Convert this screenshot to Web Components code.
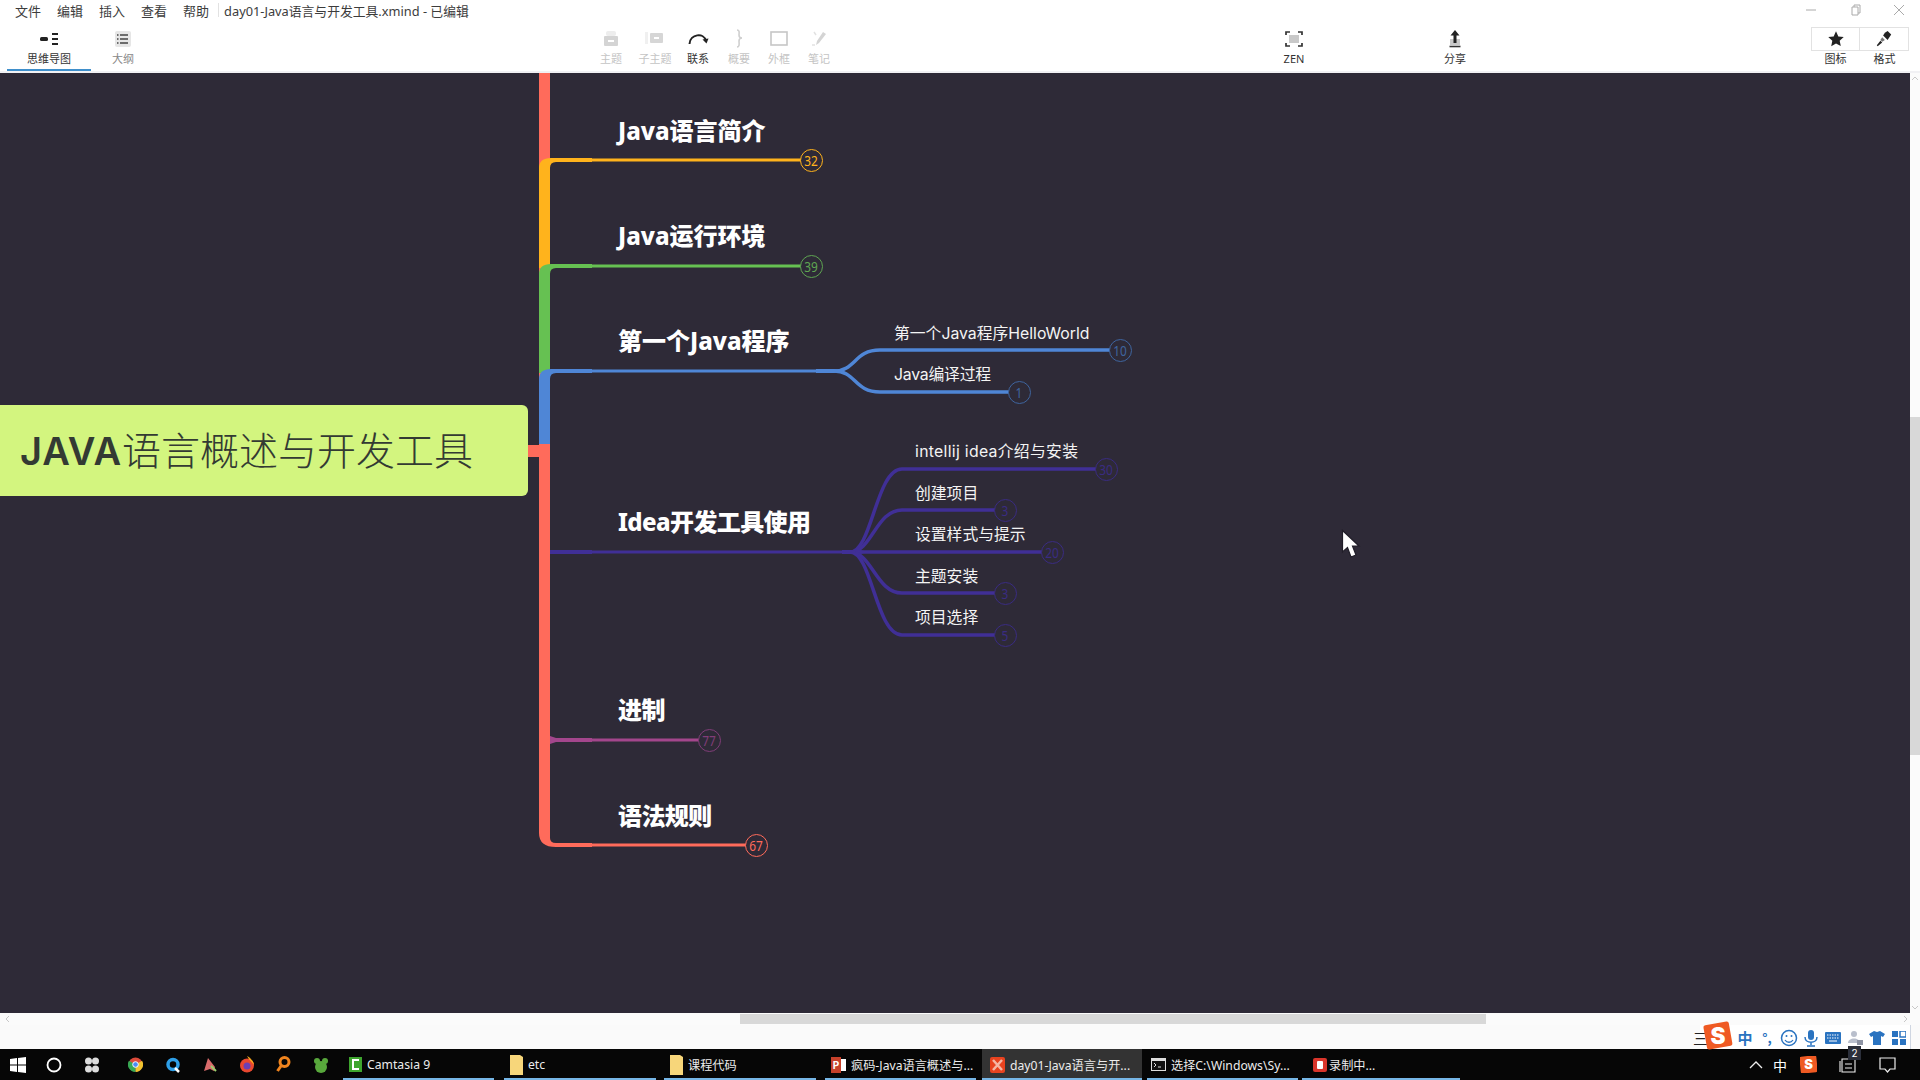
<!DOCTYPE html>
<html lang="zh">
<head>
<meta charset="utf-8">
<title>day01-Java语言与开发工具.xmind</title>
<style>
  html, body { margin: 0; height: 100%; }
  body {
    display: flex;
    flex-direction: column;
    width: 1920px;
    height: 1080px;
    overflow: hidden;
    background: #fff;
    font-family: "Noto Sans", "Noto Sans CJK SC", sans-serif;
  }
  .work { display: flex; height: 940px; }
</style>
</head>
<body>
<title-bar></title-bar>
<tool-bar>
  <tool-tab label="思维导图" active>
    <svg viewBox="0 0 24 20" width="24" height="20"><rect x="3" y="8" width="8" height="4" rx="1.5" fill="#222"/><path d="M15 5h6M15 10h6M15 15h6" stroke="#222" stroke-width="2"/></svg>
  </tool-tab>
  <tool-tab label="大纲">
    <svg viewBox="0 0 20 20" width="20" height="20"><rect x="2" y="2" width="16" height="16" rx="2" fill="#e6e6e6"/><path d="M7 6h8M7 10h8M7 14h8M4 6h1.5M4 10h1.5M4 14h1.5" stroke="#444" stroke-width="1.6"/></svg>
  </tool-tab>
  <tool-button label="主题" faint w="44" gap="434">
    <svg viewBox="0 0 20 20" width="20" height="20"><rect x="5" y="2" width="10" height="5" rx="2" fill="#ededed"/><rect x="3" y="7" width="14" height="10" rx="1" fill="#d4d4d4"/><rect x="7" y="11" width="6" height="2" fill="#fff"/></svg>
  </tool-button>
  <tool-button label="子主题" faint w="44">
    <svg viewBox="0 0 20 20" width="20" height="20"><rect x="0" y="3" width="3" height="12" fill="#f0f0f0"/><rect x="5" y="4" width="13" height="10" rx="1" fill="#d6d6d6"/><rect x="9" y="8" width="5" height="2" fill="#fff"/></svg>
  </tool-button>
  <tool-button label="联系" w="42">
    <svg viewBox="0 0 22 20" width="22" height="20"><path d="M2.5 15C3 5 17 3 19 12" fill="none" stroke="#222" stroke-width="2"/><path d="M15.5 10.5l4 4 2-5z" fill="#222"/></svg>
  </tool-button>
  <tool-button label="概要" faint w="40">
    <svg viewBox="0 0 20 20" width="20" height="20"><path d="M8 1c3 0 2 3 2 5s1 3 3 3c-2 0-3 1-3 3s1 6-2 6" fill="none" stroke="#cfcfcf" stroke-width="1.6"/></svg>
  </tool-button>
  <tool-button label="外框" faint w="40">
    <svg viewBox="0 0 20 20" width="20" height="20"><rect x="2" y="3" width="16" height="13" fill="none" stroke="#c6c6c6" stroke-width="1.6"/></svg>
  </tool-button>
  <tool-button label="笔记" faint w="40">
    <svg viewBox="0 0 20 20" width="20" height="20"><path d="M14 3l3 2-7 9-3 2 1-4z" fill="#d4d4d4"/><path d="M5 3l2 3M3 16h3" stroke="#e2e2e2" stroke-width="1.5"/></svg>
  </tool-button>
  <tool-button label="ZEN" w="44" gap="433">
    <svg viewBox="0 0 20 20" width="20" height="20"><rect x="5" y="6" width="10" height="8" fill="#c9c9c9"/><path d="M2 6V3h4M14 3h4v3M18 14v3h-4M6 17H2v-3" fill="none" stroke="#333" stroke-width="1.7"/></svg>
  </tool-button>
  <tool-button label="分享" w="44" gap="117">
    <svg viewBox="0 0 20 20" width="20" height="20"><rect x="5" y="10" width="10" height="6" fill="#c9c9c9"/><path d="M4.5 17.5h11" stroke="#333" stroke-width="1.6"/><path d="M10 1l4.5 5.5H11.5V14h-3V6.500H5.500z" fill="#222"/></svg>
  </tool-button>
  <tool-button label="图标" boxed w="49" gap="334">
    <svg viewBox="0 0 20 20" width="18" height="18"><path d="M10 1.500l2.600 5.600 6 .7-4.500 4.100 1.200 6L10 15l-5.300 3 1.200-6L1.400 7.800l6-.7z" fill="#222"/></svg>
  </tool-button>
  <tool-button label="格式" boxed w="49">
    <svg viewBox="0 0 20 20" width="18" height="18"><path d="M11 3l3-2 4 4-2 3-2 3-5-5z" fill="#222"/><path d="M8 8l3 3-3 2-2-2z" fill="#777"/><path d="M6 12l2 2-5 4-1-1z" fill="#222"/></svg>
  </tool-button>
</tool-bar>
<div class="work">
  <mind-map></mind-map>
  <v-scroll></v-scroll>
</div>
<h-scroll></h-scroll>
<ime-bar></ime-bar>
<task-bar>
  <task-item label="Camtasia 9" start="0" width="151" kind="cam" pad="6"></task-item>
  <task-item label="etc" start="10" width="152" kind="folder" pad="6"></task-item>
  <task-item label="课程代码" start="8" width="152" kind="folder" pad="6"></task-item>
  <task-item label="疯码-Java语言概述与..." start="9" width="151" kind="ppt" pad="6"></task-item>
  <task-item label="day01-Java语言与开..." start="6" width="160" kind="xmind" pad="8"></task-item>
  <task-item label="选择C:\Windows\Sy..." start="5" width="151" kind="cmd" pad="4"></task-item>
  <task-item label="录制中..." start="4" width="158" kind="rec" pad="11"></task-item>
</task-bar>

<script>
const sans = '"Noto Sans", "Noto Sans CJK SC", sans-serif';

class TitleBar extends HTMLElement {
  constructor() {
    super();
    this.attachShadow({ mode: 'open' });
    this.shadowRoot.innerHTML = `
      <style>
        :host {
          display: flex;
          align-items: center;
          box-sizing: border-box;
          height: 22px;
          padding: 0 0 2px 15px;
          background: #fff;
          color: #3c3c3c;
          font: 13px ${sans};
        }
        .menu { margin-right: 16px; }
        .sep { width: 1px; height: 14px; margin: 0 5px 0 -7px; background: #e2e2e2; }
        .name { flex: 1; font-size: 12.8px; }
        .ctl { display: flex; gap: 30px; margin-right: 14px; }
      </style>
      <span class="menu">文件</span>
      <span class="menu">编辑</span>
      <span class="menu">插入</span>
      <span class="menu">查看</span>
      <span class="menu">帮助</span>
      <span class="sep"></span>
      <span class="name">day01-Java语言与开发工具.xmind - 已编辑</span>
      <div class="ctl">
        <svg width="14" height="12" viewBox="0 0 14 12"><path d="M2 6h10" stroke="#aaa"/></svg>
        <svg width="14" height="12" viewBox="0 0 14 12"><path d="M4 3h6v8H4zM6 3V1h6v8h-2" fill="none" stroke="#aaa"/></svg>
        <svg width="14" height="12" viewBox="0 0 14 12"><path d="M2 1l10 10M12 1L2 11" stroke="#aaa"/></svg>
      </div>`;
  }
}

class ToolBar extends HTMLElement {
  constructor() {
    super();
    this.attachShadow({ mode: 'open' });
    this.shadowRoot.innerHTML = `
      <style>
        :host {
          display: flex;
          box-sizing: border-box;
          height: 51px;
          padding-left: 7px;
          background: #fff;
          border-bottom: 2px solid #f1f1f4;
        }
      </style>
      <slot></slot>`;
  }
}

class ToolTab extends HTMLElement {
  constructor() {
    super();
    this.attachShadow({ mode: 'open' });
    this.shadowRoot.innerHTML = `
      <style>
        :host {
          display: flex;
          flex-direction: column;
          align-items: center;
          box-sizing: border-box;
          width: 64px;
          padding-top: 6px;
          color: #888;
          font: 11px/16px ${sans};
        }
        :host([active]) {
          width: 84px;
          color: #333;
          border-bottom: 2px solid #3f8fcb;
        }
        .icon { display: flex; height: 23px; align-items: center; padding-bottom: 1px; box-sizing: border-box; }
      </style>
      <div class="icon"><slot></slot></div>
      <span>${this.getAttribute('label')}</span>`;
  }
}

class ToolButton extends HTMLElement {
  constructor() {
    super();
    this.attachShadow({ mode: 'open' });
    this.shadowRoot.innerHTML = `
      <style>
        :host {
          display: flex;
          flex-direction: column;
          align-items: center;
          padding-top: 6px;
          color: #333;
          font: 11px/16px ${sans};
        }
        :host([faint]) { color: #c4c4c4; }
        .icon { display: flex; box-sizing: border-box; height: 23px; padding-bottom: 1px; align-items: center; justify-content: center; }
        :host([boxed]) .icon {
          align-self: stretch;
          height: 24px;
          margin-top: -1px;
          border: 1px solid #e2e2e2;
          border-left-width: 0;
        }
        :host([label="图标"]) .icon { border-left-width: 1px; }
      </style>
      <div class="icon"><slot></slot></div>
      <span>${this.getAttribute('label')}</span>`;
    this.style.width = this.getAttribute('w') + 'px';
    if (this.hasAttribute('gap')) this.style.marginLeft = this.getAttribute('gap') + 'px';
  }
}

// main topics of the map, y is where the branch line runs, ls is letter spacing
const TOPICS = [
  { name: 'Java语言简介', y: 160, color: '#ffb31c', end: 811, count: '32', ring: '#ffb31c', textY: 131 },
  { name: 'Java运行环境', y: 266, color: '#66c152', end: 811, count: '39', ring: '#5fa552', textY: 236 },
  { name: '第一个Java程序', y: 371, color: '#4f86d6', textY: 341, from: 816, to: 880, bend: 18, subs: [
    { name: '第一个Java程序HelloWorld', y: 350, end: 1120, count: '10', textY: 334 },
    { name: 'Java编译过程', y: 392, end: 1019, count: '1', textY: 375, ls: -0.2 }
  ], ring: '#3f659f', subX: 894 },
  { name: 'Idea开发工具使用', y: 552, color: '#402f96', textY: 522, ls: -0.6, from: 842, to: 902, bend: 8, subs: [
    { name: 'intellij idea介绍与安装', y: 469, end: 1106, count: '30', textY: 452, ls: 0.3 },
    { name: '创建项目', y: 510, end: 1005, count: '3', textY: 494 },
    { name: '设置样式与提示', y: 552, end: 1052, count: '20', textY: 535 },
    { name: '主题安装', y: 593, end: 1005, count: '3', textY: 577 },
    { name: '项目选择', y: 635, end: 1005, count: '5', textY: 618 }
  ], ring: '#3a2c82', subX: 915 },
  { name: '进制', y: 740, color: '#a3468c', end: 709, count: '77', ring: '#803d78', textY: 710, ls: -0.6 },
  { name: '语法规则', y: 845, color: '#ff6b5b', end: 756, count: '67', ring: '#ff6b5b', textY: 816, ls: -0.6 }
];
const TOP = 73; // map coordinates below are page y, canvas starts here

class MindTopic extends HTMLElement {
  constructor() {
    super();
    this.attachShadow({ mode: 'open' });
    this.shadowRoot.innerHTML = `
      <style>
        :host {
          position: absolute;
          transform: translateY(-50%);
          color: #fff;
          white-space: nowrap;
          font: 800 24px/32px "Noto Sans", "Noto Sans CJK SC", sans-serif;
        }
        :host([sub]) { font: 400 15.800px/22px Inter, "Noto Sans CJK SC", sans-serif; color: #f4f4f4; }
      </style>
      <slot></slot>`;
  }
}

class MindCount extends HTMLElement {
  constructor() {
    super();
    this.attachShadow({ mode: 'open' });
    this.shadowRoot.innerHTML = `
      <style>
        :host {
          position: absolute;
          display: flex;
          align-items: center;
          justify-content: center;
          box-sizing: border-box;
          width: 23px;
          height: 23px;
          margin: -11.500px 0 0 -11.500px;
          border: 1.600px solid var(--ring);
          border-radius: 50%;
          background: #2e2a37;
          color: var(--ring);
          font: 14px "Noto Sans", sans-serif;
        }
        span { transform: scaleX(.85); }
      </style>
      <span><slot></slot></span>`;
  }
}

class MindMap extends HTMLElement {
  constructor() {
    super();
    this.attachShadow({ mode: 'open' });
    let lines = '';
    let extras = '';
    const red = '#ff6b5b';
    // trunk, red all the way, coloured parts on top
    lines += `<path d="M539 ${TOP - 5}h11V838q0 5 6 5h36v4H556q-17 0-17-14z" fill="${red}"/>`;
    lines += `<path d="M528 445h22v12h-22z" fill="${red}"/>`;
    const trunk = [[158, 268, '#ffb31c'], [264, 373, '#66c152'], [369, 444, '#4f86d6']];
    trunk.forEach(([a, b, c]) => {
      lines += `<path d="M539 ${b}V${a + 10}q0-10 12-10h41v4H556q-6 0-6 6V${b}z" fill="${c}"/>`;
    });
    // purple stub
    lines += `<path d="M550 736l6 2h36v4h-36l-6 2z" fill="#a3468c"/>`;
    lines += `<path d="M550 550h42v4h-42z" fill="#402f96"/>`;

    TOPICS.forEach(t => {
      extras += `<mind-topic style="left:618px;top:${t.textY - TOP}px;letter-spacing:${t.ls || 0}px">${t.name}</mind-topic>`;
      if (t.subs) {
        lines += `<path d="M592 ${t.y}H${t.from}" stroke="${t.color}" stroke-width="3" fill="none"/>`;
        lines += `<path d="M${t.from} ${t.y - 2}h18l8 2-8 2h-18z" fill="${t.color}"/>`;
        t.subs.forEach(s => {
          const mid = t.from + t.bend;
          lines += `<path d="M${mid} ${t.y}C${mid + 22} ${t.y} ${t.to - 26} ${s.y} ${t.to} ${s.y}H${s.end - 8}" stroke="${t.color}" stroke-width="3.500" fill="none"/>`;
          extras += `<mind-topic sub style="left:${t.subX}px;top:${s.textY - TOP}px;letter-spacing:${s.ls || 0}px">${s.name}</mind-topic>`;
          extras += `<mind-count style="left:${s.end}px;top:${s.y - TOP}px;--ring:${t.ring}">${s.count}</mind-count>`;
        });
      } else {
        lines += `<path d="M592 ${t.y}H${t.end - 8}" stroke="${t.color}" stroke-width="3" fill="none"/>`;
        extras += `<mind-count style="left:${t.end}px;top:${t.y - TOP}px;--ring:${t.ring}">${t.count}</mind-count>`;
      }
    });

    this.shadowRoot.innerHTML = `
      <style>
        :host {
          display: block;
          position: relative;
          flex: 1;
          overflow: hidden;
          background: #2e2a37;
        }
        svg.lines { position: absolute; left: 0; top: 0; }
        .root {
          position: absolute;
          left: 0;
          top: ${405 - TOP}px;
          display: flex;
          align-items: center;
          box-sizing: border-box;
          width: 528px;
          height: 91px;
          padding: 0 0 6px 20px;
          border-radius: 0 6px 6px 0;
          background: #d3f57f;
          color: #333a33;
          white-space: nowrap;
          font: 300 39px "Noto Sans CJK SC", sans-serif;
        }
        .root b { font: 600 38px Inter, sans-serif; letter-spacing: .9px; }
        .cursor { position: absolute; left: 1340px; top: ${528 - TOP}px; }
      </style>
      <svg class="lines" width="1910" height="940" viewBox="0 ${TOP} 1910 940">${lines}</svg>
      <div class="root"><span><b>JAVA</b>语言概述与开发工具</span></div>
      ${extras}
      <svg class="cursor" width="24" height="34" viewBox="0 0 24 34"><path d="M2.500 2.500V24l5-4.500L11 29l5-2-3.500-9H19z" fill="#fff" stroke="#201d28" stroke-width="1.2"/></svg>`;
  }
}

class VScroll extends HTMLElement {
  constructor() {
    super();
    this.attachShadow({ mode: 'open' });
    this.shadowRoot.innerHTML = `
      <style>
        :host {
          display: flex;
          flex-direction: column;
          align-items: center;
          width: 10px;
          background: #fbfbfb;
        }
        svg { flex: none; margin: 3px 0; }
        .thumb { align-self: stretch; height: 338px; margin-top: 333px; background: #d8d8d8; }
        .last { margin-top: auto; }
      </style>
      <svg width="8" height="5" viewBox="0 0 8 5"><path d="M1 4l3-3 3 3" fill="none" stroke="#c8c8c8"/></svg>
      <div class="thumb"></div>
      <svg class="last" width="8" height="5" viewBox="0 0 8 5"><path d="M1 1l3 3 3-3" fill="none" stroke="#c8c8c8"/></svg>`;
  }
}

class HScroll extends HTMLElement {
  constructor() {
    super();
    this.attachShadow({ mode: 'open' });
    this.shadowRoot.innerHTML = `
      <style>
        :host {
          display: flex;
          align-items: center;
          box-sizing: border-box;
          height: 12px;
          padding: 1px 0 1px 5px;
          background: #fbfbfb;
        }
        svg { flex: none; }
        .thumb { width: 746px; height: 100%; margin-left: 730px; background: #d8d8d8; }
        .last { margin: 0 12px 0 auto; }
      </style>
      <svg width="5" height="8" viewBox="0 0 5 8"><path d="M4 1L1 4l3 3" fill="none" stroke="#c8c8c8"/></svg>
      <div class="thumb"></div>
      <svg class="last" width="5" height="8" viewBox="0 0 5 8"><path d="M1 1l3 3-3 3" fill="none" stroke="#c8c8c8"/></svg>`;
  }
}

class ImeBar extends HTMLElement {
  constructor() {
    super();
    this.attachShadow({ mode: 'open' });
    const blue = '#2a73c0';
    this.shadowRoot.innerHTML = `
      <style>
        :host {
          display: flex;
          justify-content: flex-end;
          height: 24px;
          background: #fafafa;
        }
        .box {
          display: flex;
          align-items: center;
          box-sizing: border-box;
          height: 24px;
          margin-right: 9px;
          padding: 1px 0 0 34px;
          border-right: 1px solid #cfd6e2;
          background: #fff;
          position: relative;
        }
        .logo { position: absolute; left: 3px; top: -4px; }
        .item {
          display: flex;
          justify-content: center;
          align-items: center;
          width: 22px;
          color: ${blue};
          font: 700 15px "Noto Sans CJK SC", sans-serif;
        }
        .first { position: absolute; left: -7px; top: 5px; width: 12px; height: 15px; color: #222; font: 15px "Noto Sans CJK SC", sans-serif; line-height: 15px; }
      </style>
      <div class="box">
        <span class="first">三</span>
        <svg class="logo" width="30" height="30" viewBox="0 0 28 28"><rect x="2" y="2" width="24" height="23" rx="2" fill="#ef5a23" transform="rotate(-10 14 14)"/><text x="14" y="21" text-anchor="middle" fill="#fff" font-family="Inter, sans-serif" font-weight="900" font-size="21">S</text></svg>
        <span class="item">中</span>
        <span class="item" style="font-size:13px">°,</span>
        <span class="item"><svg width="18" height="18" viewBox="0 0 18 18"><circle cx="9" cy="9" r="7.500" fill="none" stroke="${blue}" stroke-width="1.500"/><circle cx="6.500" cy="7" r="1" fill="${blue}"/><circle cx="11.500" cy="7" r="1" fill="${blue}"/><path d="M5 11c2 3 6 3 8 0" fill="none" stroke="${blue}" stroke-width="1.300"/></svg></span>
        <span class="item"><svg width="14" height="18" viewBox="0 0 14 18"><rect x="4" y="1" width="6" height="10" rx="3" fill="${blue}"/><path d="M1 8c0 7 12 7 12 0M7 13v3M3 17h8" fill="none" stroke="${blue}" stroke-width="1.500"/></svg></span>
        <span class="item"><svg width="16" height="12" viewBox="0 0 16 12"><rect width="16" height="12" rx="1" fill="${blue}"/><path d="M2 3h12M2 6h12" stroke="#fff" stroke-dasharray="1.500 1"/><path d="M4 9h8" stroke="#fff"/></svg></span>
        <span class="item"><svg width="16" height="16" viewBox="0 0 16 16"><circle cx="7" cy="4" r="3" fill="#b9bfcc"/><path d="M1 13c0-6 12-6 12 0z" fill="#b9bfcc"/><rect x="10" y="10" width="6" height="5" fill="#8d93a3"/></svg></span>
        <span class="item"><svg width="16" height="14" viewBox="0 0 16 14"><path d="M5 0l3 1 3-1 5 3-2 3-2-1v9H4V5L2 6 0 3z" fill="${blue}"/></svg></span>
        <span class="item"><svg width="14" height="14" viewBox="0 0 14 14"><rect width="6" height="6" fill="${blue}"/><rect x="8" width="6" height="6" fill="none" stroke="${blue}" stroke-width="1.500"/><rect y="8" width="6" height="6" fill="${blue}"/><rect x="8" y="8" width="6" height="6" fill="${blue}"/></svg></span>
      </div>`;
  }
}

const TASK_ICONS = {
  cam: `<svg width="13" height="15" viewBox="0 0 13 15"><rect width="13" height="15" fill="#3ea52e"/><path d="M10 3H4v9h6" fill="none" stroke="#fff" stroke-width="2"/></svg>`,
  folder: `<svg width="13" height="20" viewBox="0 0 13 20"><path d="M0 0h10l3 2v18H0z" fill="#f7d67a"/></svg>`,
  ppt: `<svg width="15" height="16" viewBox="0 0 15 16"><rect x="5" y="2" width="10" height="12" fill="#fff"/><rect width="10" height="16" fill="#c6402a"/><text x="5" y="12" text-anchor="middle" fill="#fff" font-family="Inter, sans-serif" font-size="10" font-weight="700">P</text></svg>`,
  xmind: `<svg width="15" height="16" viewBox="0 0 15 16"><rect width="15" height="16" rx="2" fill="#e8431f"/><path d="M3 3l9 10M12 3L3 13" stroke="#f5b6a4" stroke-width="2.500"/></svg>`,
  cmd: `<svg width="15" height="13" viewBox="0 0 15 13"><rect x=".5" y=".5" width="14" height="12" fill="#111" stroke="#ddd"/><rect x="1" y="1" width="13" height="2" fill="#ddd"/><path d="M3 5l2 2-2 2M7 9h3" fill="none" stroke="#ddd"/></svg>`,
  rec: `<svg width="14" height="14" viewBox="0 0 14 14"><rect width="14" height="14" rx="2" fill="#d9352b"/><rect x="4" y="3" width="6" height="8" rx="1" fill="#fff"/></svg>`
};

class TaskItem extends HTMLElement {
  constructor() {
    super();
    this.attachShadow({ mode: 'open' });
    this.shadowRoot.innerHTML = `
      <style>
        :host {
          display: flex;
          align-items: center;
          gap: 5px;
          box-sizing: border-box;
          height: 31px;
          padding-top: 2px;
          border-bottom: 2px solid #76b6e6;
          color: #ececec;
          white-space: nowrap;
          font: 12.200px "Noto Sans", "Noto Sans CJK SC", sans-serif;
        }
        :host([kind="xmind"]) { background: #333; }
        :host([kind="rec"]) { gap: 2px; }
      </style>
      ${TASK_ICONS[this.getAttribute('kind')]}
      <span>${this.getAttribute('label')}</span>`;
    this.style.width = this.getAttribute('width') + 'px';
    this.style.marginLeft = this.getAttribute('start') + 'px';
    this.style.paddingLeft = this.getAttribute('pad') + 'px';
  }
}

class TaskBar extends HTMLElement {
  constructor() {
    super();
    this.attachShadow({ mode: 'open' });
    this.shadowRoot.innerHTML = `
      <style>
        :host {
          display: flex;
          align-items: center;
          height: 31px;
          background: #060606;
          color: #fff;
        }
        .pins { display: flex; align-items: center; width: 343px; }
        .pin { display: flex; justify-content: center; flex: none; width: 37px; }
        .items { display: flex; }
        .tray { display: flex; align-items: center; margin-left: auto; padding-right: 24px; }
      </style>
      <div class="pins">
        <span class="pin" style="width:36px"><svg width="16" height="16" viewBox="0 0 16 16" fill="#fff"><path d="M0 2l7-1v6.500H0zM8 1l8-1v7.500H8zM0 8.500h7V15l-7-1zM8 8.500h8V16l-8-1z"/></svg></span>
        <span class="pin" style="width:35px"><svg width="16" height="16" viewBox="0 0 16 16"><circle cx="8" cy="8" r="6.500" fill="none" stroke="#fff" stroke-width="1.800"/></svg></span>
        <span class="pin" style="width:46px;padding-right:4px;box-sizing:border-box"><svg width="16" height="16" viewBox="0 0 16 16" fill="#ddd"><circle cx="4.500" cy="4" r="3.500"/><circle cx="11.500" cy="4" r="3.500"/><circle cx="4.500" cy="12" r="3.500"/><circle cx="11.500" cy="12" r="3.500"/></svg></span>
        <span class="pin"><svg width="15" height="15" viewBox="0 0 16 16"><circle cx="8" cy="8" r="7.500" fill="#dc4a3a"/><path d="M8 8L15 4A8 8 0 0 1 8 16z" fill="#f2c230"/><path d="M8 8L8 16A8 8 0 0 1 1 4z" fill="#36a853"/><circle cx="8" cy="8" r="3" fill="#4b8bf4" stroke="#fff"/></svg></span>
        <span class="pin"><svg width="16" height="16" viewBox="0 0 16 16"><circle cx="8" cy="7.500" r="5" fill="none" stroke="#2e9fe8" stroke-width="3.500"/><path d="M10 11l4 4" stroke="#fff" stroke-width="2.500"/></svg></span>
        <span class="pin"><svg width="16" height="16" viewBox="0 0 16 16"><path d="M6 1l7 9-1 4-4-2-6 2z" fill="#d96b6b"/><path d="M9 9l5 5" stroke="#9ccf6f" stroke-width="2"/></svg></span>
        <span class="pin"><svg width="16" height="17" viewBox="0 0 16 17"><circle cx="8" cy="9.500" r="7" fill="#e8472f"/><circle cx="8" cy="10" r="3.500" fill="#6b3fb5"/><path d="M8 0c4 2 7 6 7 9-2-3-5-5-7-9z" fill="#f8a81e"/></svg></span>
        <span class="pin"><svg width="15" height="17" viewBox="0 0 15 17"><circle cx="8.500" cy="6" r="4.500" fill="none" stroke="#f0841e" stroke-width="3"/><path d="M5 10l-3.500 5" stroke="#f0841e" stroke-width="3"/></svg></span>
        <span class="pin"><svg width="16" height="17" viewBox="0 0 16 17" fill="#58a83c"><circle cx="8" cy="11" r="6"/><circle cx="4" cy="5" r="3"/><circle cx="12" cy="5" r="3"/></svg></span>
      </div>
      <div class="items"><slot></slot></div>
      <div class="tray">
        <svg width="14" height="8" viewBox="0 0 14 8"><path d="M1 7l6-6 6 6" fill="none" stroke="#eee" stroke-width="1.300"/></svg>
        <span style="margin:0 0 0 10px;font:14px 'Noto Sans CJK SC',sans-serif">中</span>
        <svg style="margin-left:13px" width="17" height="17" viewBox="0 0 17 17"><rect width="17" height="17" rx="2" fill="#ef5a23" transform="rotate(-6 8 8)"/><text x="8.500" y="13" text-anchor="middle" fill="#fff" font-family="Inter, sans-serif" font-weight="900" font-size="13">S</text></svg>
        <span style="position:relative;margin-left:22px;display:flex">
          <svg width="18" height="17" viewBox="0 0 18 17"><path d="M3 3h13v13H3zM1 5v11" fill="none" stroke="#eee" stroke-width="1.100"/><path d="M6 8h7M6 12h7" stroke="#eee"/></svg>
          <span style="position:absolute;left:9px;top:-10px;width:13px;height:14px;background:#2b2f3a;color:#fff;font:10px/14px Inter,sans-serif;text-align:center">2</span>
        </span>
        <svg style="margin-left:22px" width="17" height="16" viewBox="0 0 17 16"><path d="M1 1h15v11h-5l-2.500 3-2.500-3H1z" fill="none" stroke="#eee" stroke-width="1.200"/></svg>
      </div>`;
  }
}

customElements.define('title-bar', TitleBar);
customElements.define('tool-bar', ToolBar);
customElements.define('tool-tab', ToolTab);
customElements.define('tool-button', ToolButton);
customElements.define('mind-topic', MindTopic);
customElements.define('mind-count', MindCount);
customElements.define('mind-map', MindMap);
customElements.define('v-scroll', VScroll);
customElements.define('h-scroll', HScroll);
customElements.define('ime-bar', ImeBar);
customElements.define('task-item', TaskItem);
customElements.define('task-bar', TaskBar);
</script>
</body>
</html>
